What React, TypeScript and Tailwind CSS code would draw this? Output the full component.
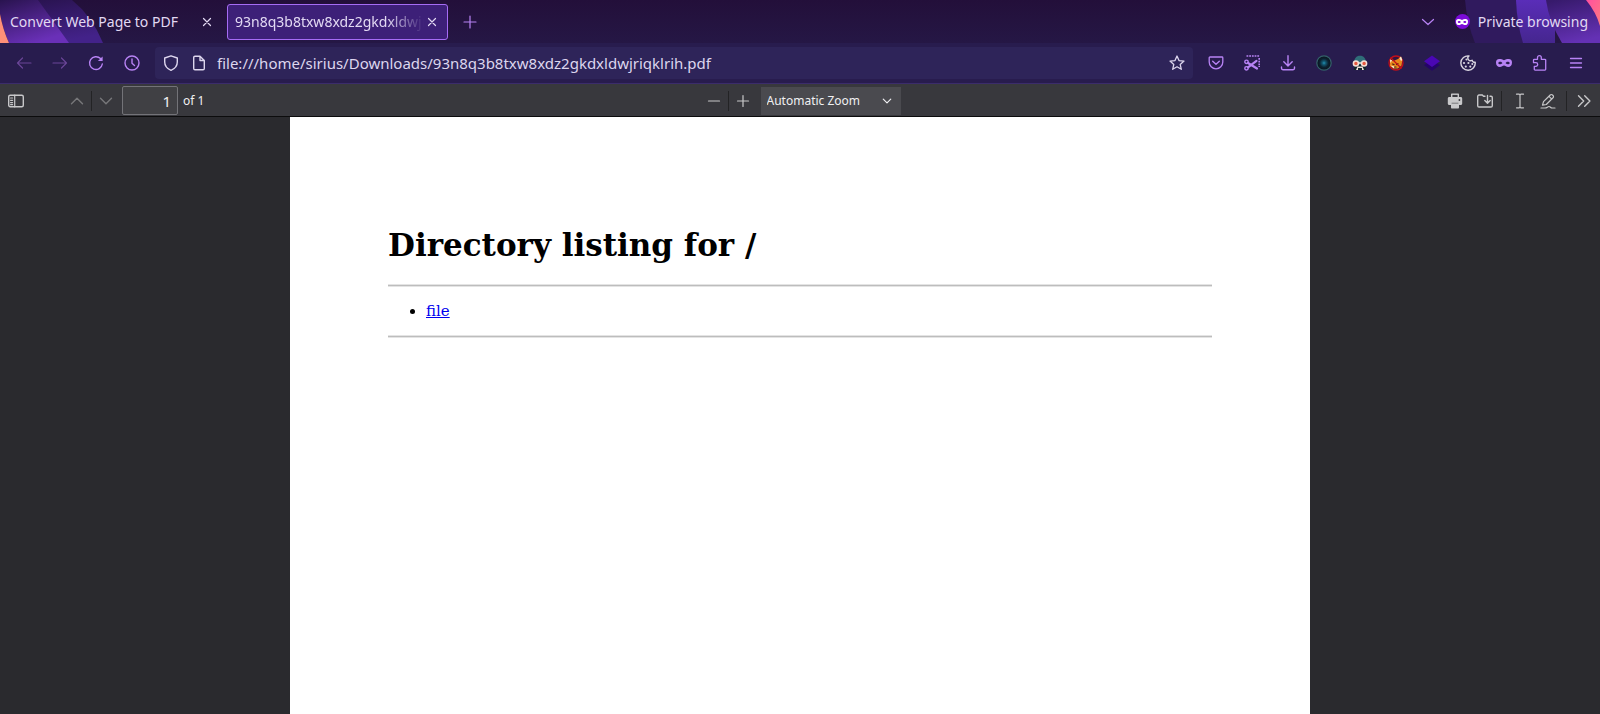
import type { ReactNode } from "react";

type IconProps = { children: ReactNode; className?: string };

function Icon({ children, className = "size-4" }: IconProps) {
  return (
    <svg
      viewBox="0 0 16 16"
      fill="none"
      stroke="currentColor"
      strokeWidth="1.2"
      strokeLinecap="round"
      strokeLinejoin="round"
      aria-hidden="true"
      className={`shrink-0 ${className}`}
    >
      {children}
    </svg>
  );
}

function NavButton({ label, children, disabled }: { label: string; children: ReactNode; disabled?: boolean }) {
  return (
    <button
      type="button"
      aria-label={label}
      disabled={disabled}
      className="flex h-8 w-9 shrink-0 items-center justify-center text-[#b883f5] disabled:text-[#6a4597]"
    >
      {children}
    </button>
  );
}

function ToolButton({ label, children, width = "w-7", disabled }: { label: string; children: ReactNode; width?: string; disabled?: boolean }) {
  return (
    <button
      type="button"
      aria-label={label}
      disabled={disabled}
      className={`flex h-7 shrink-0 items-center justify-center text-[#c8c8ca] disabled:text-[#77777a] ${width}`}
    >
      {children}
    </button>
  );
}

function Separator() {
  return <span className="h-5 w-px shrink-0 bg-[#232325]" />;
}

const maskPath =
  "M8 5.2C6.6 4.2 5 3.9 3.4 3.9 1 3.9 0 5.3 0 7.5 0 10.3 1.5 12.1 3.9 12.1c1.8 0 2.8-1.6 4.1-1.6s2.3 1.6 4.1 1.6c2.4 0 3.9-1.8 3.9-4.6 0-2.2-1-3.6-3.4-3.6-1.6 0-3.2.3-4.6 1.3ZM4.3 9.3c-1.2 0-1.9-.8-2.1-1.4.4-.6 1-1.2 2.1-1.2s1.9.7 2.1 1.4c-.3.7-1 1.2-2.1 1.2Zm7.400 0c-1.100 0-1.800-.5-2.100-1.200.2-.7 1-1.400 2.100-1.400s1.700.6 2.100 1.200c-.2.6-.9 1.400-2.100 1.400Z";

function Mask({ className }: { className?: string }) {
  return (
    <svg viewBox="0 0 16 16" fill="currentColor" fillRule="evenodd" aria-hidden="true" className={className}>
      <path d={maskPath} />
    </svg>
  );
}

function CloseIcon() {
  return (
    <Icon>
      <path d="m4.500 4.500 7 7m0-7-7 7" />
    </Icon>
  );
}

function TabBar() {
  return (
    <header className="relative flex h-[43px] items-center bg-linear-to-b from-[#230f3a] to-[#251745] text-sm text-[#e2d9f3]">
      <svg viewBox="0 0 110 43" aria-hidden="true" className="absolute top-0 left-0 h-[43px] w-[110px]">
        <defs>
          <linearGradient id="leftBand" x1="0" y1="0" x2="0.5" y2="1">
            <stop offset="0" stopColor="#29134f" />
            <stop offset="1" stopColor="#6a30b8" />
          </linearGradient>
          <linearGradient id="leftOuter" x1="0" y1="0" x2="0.3" y2="1">
            <stop offset="0" stopColor="#29134f" />
            <stop offset="1" stopColor="#432289" />
          </linearGradient>
        </defs>
        <path d="M30 0H72Q92 16 103 43H60Z" fill="url(#leftOuter)" />
        <path d="M0 0H38L69 43H9Q3 30 0 14Z" fill="url(#leftBand)" />
        <path d="M0 14Q3 30 9 43H0Z" fill="#ff8f78" />
      </svg>
      <svg viewBox="0 0 135 43" aria-hidden="true" className="absolute top-0 right-0 h-[43px] w-[135px]">
        <defs>
          <linearGradient id="rightBand" x1="0" y1="0" x2="0" y2="1">
            <stop offset="0" stopColor="#5a2db8" />
            <stop offset="1" stopColor="#45268f" />
          </linearGradient>
          <linearGradient id="rightInner" x1="0.2" y1="0" x2="0.5" y2="1">
            <stop offset="0" stopColor="#371a6c" />
            <stop offset="1" stopColor="#6431b4" />
          </linearGradient>
          <linearGradient id="rightEdge" x1="0" y1="0" x2="1" y2="1">
            <stop offset="0" stopColor="#ff4fa0" />
            <stop offset="1" stopColor="#ff7a7f" />
          </linearGradient>
        </defs>
        <path d="M0 0H60V43H10Q2 24 0 0Z" fill="#301a5e" />
        <path d="M51 0H90V43H58Q52 24 51 0Z" fill="url(#rightBand)" />
        <path d="M81 0H135V43H97Q84 22 81 0Z" fill="url(#rightInner)" />
        <path d="M121 0H135V26Q131 12 121 0Z" fill="url(#rightEdge)" />
      </svg>

      <div className="relative flex w-full items-center">
        <div className="flex w-[227px] shrink-0 items-center justify-between pr-3 pl-2.5">
          <span>Convert Web Page to PDF</span>
          <button type="button" aria-label="Close Convert Web Page to PDF">
            <CloseIcon />
          </button>
        </div>
        <div className="flex h-9 w-[221px] shrink-0 items-center rounded-[3px] border border-[#a66cf5] bg-[#3d2078] px-[7px]">
          <span className="min-w-0 flex-1 overflow-hidden whitespace-nowrap [mask-image:linear-gradient(to_right,black_80%,transparent)]">
            93n8q3b8txw8xdz2gkdxldwjriqklrih.pdf
          </span>
          <button type="button" aria-label="Close 93n8q3b8txw8xdz2gkdxldwjriqklrih.pdf">
            <CloseIcon />
          </button>
        </div>
        <button type="button" aria-label="New tab" className="ml-3.5 text-[#b883f5]">
          <Icon>
            <path d="M8 2v12M2 8h12" />
          </Icon>
        </button>
        <button type="button" aria-label="List all tabs" className="mr-[19px] ml-auto text-[#b883f5]">
          <Icon>
            <path d="m2.500 5.500 5.500 5 5.500-5" />
          </Icon>
        </button>
        <div className="mr-3 flex items-center gap-2">
          <span className="flex size-[15px] items-center justify-center rounded-full bg-[#7b0bd8] text-white">
            <Mask className="size-3" />
          </span>
          <span>Private browsing</span>
        </div>
      </div>
    </header>
  );
}

function NavBar() {
  return (
    <nav className="flex h-[41px] items-center border-b border-[#3b2c6b] bg-[#281c4e] px-1.5">
      <NavButton label="Back" disabled>
        <Icon>
          <path d="M15 8H1.500M6.500 3l-5 5 5 5" />
        </Icon>
      </NavButton>
      <NavButton label="Forward" disabled>
        <Icon>
          <path d="M1 8h13.500M9.500 3l5 5-5 5" />
        </Icon>
      </NavButton>
      <NavButton label="Reload">
        <Icon>
          <path d="M14.300 9a6.400 6.400 0 1 1-1.800-5.400" strokeWidth="1.400" />
          <path d="M14.600 1.400v4.700H9.900Z" fill="currentColor" stroke="none" />
        </Icon>
      </NavButton>
      <NavButton label="History">
        <Icon>
          <circle cx="8" cy="8" r="7" strokeWidth="1.400" />
          <path d="M8 4v4.300l2.500 2.200" strokeWidth="1.400" />
        </Icon>
      </NavButton>

      <div className="ml-[5px] flex h-8 min-w-0 flex-1 items-center rounded bg-[#2e2459] px-2 text-[#ddd6ee]">
        <Icon>
          <path d="M8 .8 14.300 3v4c0 4-2.700 6.800-6.300 8.300C4.400 13.800 1.700 11 1.700 7V3Z" strokeWidth="1.400" />
        </Icon>
        <Icon className="ml-3 size-4">
          <path d="M9 1.200H4a1.300 1.300 0 0 0-1.300 1.300v11A1.300 1.300 0 0 0 4 14.800h8a1.300 1.300 0 0 0 1.300-1.300V5.500L9 1.200v4.300h4.300" strokeWidth="1.400" />
        </Icon>
        <input
          type="text"
          aria-label="Address"
          defaultValue="file:///home/sirius/Downloads/93n8q3b8txw8xdz2gkdxldwjriqklrih.pdf"
          className="ml-2.5 min-w-0 flex-1 bg-transparent text-[15px] outline-none"
        />
        <button type="button" aria-label="Bookmark this page">
          <Icon>
            <path d="m8 1 2 4.600 5 .5-3.800 3.300 1.100 4.900L8 11.800l-4.300 2.500 1.100-4.900L1 6.100l5-.5Z" strokeWidth="1.300" />
          </Icon>
        </button>
      </div>

      <div className="ml-[5px] flex items-center">
        <NavButton label="Save to Pocket">
          <Icon>
            <path d="M2 2h12a.8.8 0 0 1 .8.8V7a6.800 6.800 0 0 1-13.600 0V2.800A.8.8 0 0 1 2 2Z" strokeWidth="1.300" />
            <path d="m4.700 6.300 3.300 3 3.300-3" strokeWidth="1.400" />
          </Icon>
        </NavButton>
        <NavButton label="Take a screenshot">
          <Icon>
            <path d="M2.500 1H16M15.200 3v9" strokeWidth="1.600" strokeDasharray="1.800 .9" strokeLinecap="butt" />
            <circle cx="2.500" cy="6.800" r="1.700" strokeWidth="1.400" />
            <circle cx="2.500" cy="13.300" r="1.700" strokeWidth="1.400" />
            <path d="m4 8 9 5.500M4 12.300l8.500-6.500" strokeWidth="2.200" />
          </Icon>
        </NavButton>
        <NavButton label="Downloads">
          <Icon>
            <path d="M8 .7v10M3.800 6.800 8 11l4.200-4.200M1.500 12v1.300c0 .8.5 1.400 1.400 1.400h10.200c.9 0 1.400-.6 1.400-1.400V12" strokeWidth="1.400" />
          </Icon>
        </NavButton>
        <NavButton label="Camera lens extension">
          <Icon>
            <defs>
              <radialGradient id="lens">
                <stop offset="0" stopColor="#2391b4" />
                <stop offset="0.25" stopColor="#12566f" />
                <stop offset="0.6" stopColor="#0c2231" />
                <stop offset="1" stopColor="#0a121c" />
              </radialGradient>
            </defs>
            <circle cx="8" cy="8" r="7.200" fill="url(#lens)" stroke="#34606a" strokeWidth="1.200" />
          </Icon>
        </NavButton>
        <NavButton label="User agent extension">
          <Icon>
            <path d="M2 8C2 3.300 4.300.7 8 .7S14 3.300 14 8v6.500H2Z" fill="#2f6d78" stroke="none" />
            <path d="M2 9.500h12V15H2Z" fill="#14242c" stroke="none" />
            <path d="M5.500 11.500h5L12 15H4Z" fill="#efe0d8" stroke="none" />
            <path d="M6 13h4v2H6Z" fill="#14242c" stroke="none" />
            <path d="M5 8h6" stroke="#f4dfd6" strokeWidth="1.600" />
            <circle cx="3.900" cy="8.500" r="2.500" fill="#e6583f" stroke="#f4dfd6" strokeWidth="1.500" />
            <circle cx="12.100" cy="8.500" r="2.500" fill="#e6583f" stroke="#f4dfd6" strokeWidth="1.500" />
          </Icon>
        </NavButton>
        <NavButton label="FoxyProxy">
          <Icon>
            <circle cx="8" cy="8" r="7" fill="#35163f" stroke="#c40e18" strokeWidth="1.300" />
            <path d="M2 4.500 5.500 6 10 4l3-2.500 1.300 4-.8 5-3.500 3H5.500L2 11Z" fill="#e8871c" stroke="none" />
            <path d="m2 4.500 2 .8L2.500 8ZM11.500 3l1.500-1.500L14.300 5 13 6ZM2.500 10.500l3.500 3 .5-2Z" fill="#f6ead6" stroke="none" />
            <path d="m4.500 9 1.500.6M8.500 9.500l1.500-.8M6.500 12H8" stroke="#4e2412" />
            <path d="m3 3 10 10" stroke="#c40e18" strokeWidth="1.300" />
          </Icon>
        </NavButton>
        <NavButton label="Layers extension">
          <Icon>
            <path d="m0 10 8-5 8 5-8 5.800Z" fill="#25046a" stroke="none" />
            <path d="m0 6.200L8 .5l8 5.700L8 12Z" fill="#4a07b4" stroke="none" />
          </Icon>
        </NavButton>
        <NavButton label="Cookie editor">
          <Icon className="size-4 text-[#d9d5e0]">
            <path d="M9 .9a7.200 7.200 0 1 0 6.200 6.300 2.400 2.400 0 0 1-3.100-2A2.600 2.600 0 0 1 9 .9Z" strokeWidth="1.400" />
            <g fill="currentColor" stroke="none">
              <circle cx="6.500" cy="4.500" r="1.100" />
              <circle cx="4" cy="8" r="1.100" />
              <circle cx="8.400" cy="8" r="1.100" />
              <circle cx="5.800" cy="11.600" r="1.100" />
              <circle cx="10.300" cy="11.600" r="1.100" />
              <circle cx="12.300" cy="8.900" r="1" />
            </g>
          </Icon>
        </NavButton>
        <NavButton label="Private window">
          <Mask className="size-4" />
        </NavButton>
        <NavButton label="Extensions">
          <Icon>
            <path d="M5.500 4.300V2.600a1.900 1.900 0 0 1 3.800 0v1.700h3.600a.8.8 0 0 1 .8.8v9.200a.8.8 0 0 1-.8.8H3.100a.8.8 0 0 1-.8-.8v-3h1.600a1.800 1.800 0 0 0 0-3.600H1.500V5.100a.8.8 0 0 1 .8-.8Z" strokeWidth="1.300" />
          </Icon>
        </NavButton>
        <NavButton label="Open application menu">
          <Icon>
            <path d="M2.500 3.500h11M2.500 8h11M2.500 12.500h11" strokeWidth="1.300" />
          </Icon>
        </NavButton>
      </div>
    </nav>
  );
}

function PdfToolbar() {
  return (
    <div className="grid h-[33px] grid-cols-[1fr_auto_1fr] items-center border-b border-[#0c0c0d] bg-[#38383d] pt-px text-xs text-[#f0f0f2]">
      <div className="flex items-center pl-0.5">
        <ToolButton label="Toggle sidebar">
          <Icon>
            <rect x=".7" y="2.200" width="14.600" height="11.600" rx="1.500" strokeWidth="1.400" />
            <path d="M6.700 2.200v11.600M2.600 5h2M2.600 7.300h2M2.600 9.600h2M2.600 11.700h2" />
          </Icon>
        </ToolButton>
        <span className="w-[33px]" />
        <ToolButton label="Previous page" disabled>
          <Icon>
            <path d="m2.500 10.800 5.500-5.600 5.500 5.600" strokeWidth="1.400" />
          </Icon>
        </ToolButton>
        <Separator />
        <ToolButton label="Next page" disabled>
          <Icon>
            <path d="m2.500 5.200 5.500 5.600 5.500-5.600" strokeWidth="1.400" />
          </Icon>
        </ToolButton>
        <input
          type="text"
          aria-label="Page"
          defaultValue="1"
          className="ml-0.5 h-[29px] w-14 rounded-xs border border-[#737378] bg-[#404044] px-1.5 text-right text-[15px] outline-none"
        />
        <span className="ml-[5px]">of 1</span>
      </div>

      <div className="flex items-center">
        <ToolButton label="Zoom out">
          <Icon>
            <path d="M2.500 8h11" />
          </Icon>
        </ToolButton>
        <Separator />
        <ToolButton label="Zoom in">
          <Icon>
            <path d="M2.500 8h11M8 2.500v11" />
          </Icon>
        </ToolButton>
        <div className="relative ml-1">
          <select aria-label="Zoom" className="block h-7 w-[140px] appearance-none bg-[#4a4a4f] pl-1.5 outline-none">
            <option>Automatic Zoom</option>
          </select>
          <Icon className="pointer-events-none absolute top-2 right-2 size-3">
            <path d="m3 5.500 5 5 5-5" strokeWidth="1.600" />
          </Icon>
        </div>
      </div>

      <div className="flex items-center justify-end">
        <ToolButton label="Print">
          <Icon>
            <path
              d="M4 4V1.500C4 .9 4.300.5 5 .5h6c.7 0 1 .4 1 1V4h1.700c.9 0 1.500.6 1.500 1.500v5c0 .9-.6 1.500-1.500 1.500H12v2.500c0 .6-.4 1-1 1H5c-.6 0-1-.4-1-1V12H2.300C1.400 12 .8 11.400.8 10.500v-5C.8 4.600 1.400 4 2.300 4Z"
              fill="currentColor"
              stroke="none"
            />
            <path d="M5.400 1.900h5.200V4H5.400Z" fill="#38383d" stroke="none" />
            <circle cx="12.400" cy="7" r=".9" fill="#38383d" stroke="none" />
            <path d="M5 10.200h6" stroke="#77777a" strokeWidth="1" />
          </Icon>
        </ToolButton>
        <ToolButton label="Save" width="w-8">
          <Icon>
            <path d="M6.500 3.200 5.300 2H2A1.300 1.300 0 0 0 .7 3.300v9.400A1.300 1.300 0 0 0 2 14h12a1.300 1.300 0 0 0 1.300-1.300V4.500A1.300 1.300 0 0 0 14 3.200h-1M6.500 3.200H8M10.500 2.500V10M7.800 7.500l2.700 2.800 2.700-2.800" strokeWidth="1.400" />
          </Icon>
        </ToolButton>
        <Separator />
        <ToolButton label="Text" width="w-9">
          <Icon>
            <path d="M4.500 1.200H7c.6 0 1 .4 1 1 0-.6.4-1 1-1h2.500M8 2.200v11.600M4.500 14.800H7c.6 0 1-.4 1-1 0 .6.4 1 1 1h2.500" />
          </Icon>
        </ToolButton>
        <ToolButton label="Draw" width="w-5">
          <Icon>
            <path d="M2.500 12.200 3.500 8.700 10.200 2a1.600 1.600 0 0 1 2.300 0l.5.5a1.600 1.600 0 0 1 0 2.300L6.300 11.500ZM9 3.300l2.800 2.800M1 15h4c2 0 2.500-1.500 4-1.500S10.500 15 12 15h3" />
          </Icon>
        </ToolButton>
        <span className="w-2" />
        <Separator />
        <ToolButton label="Tools" width="w-[33px]">
          <Icon>
            <path d="m2.500 2.800 5.200 5.200-5.200 5.200M8.700 2.800l5.200 5.200-5.200 5.200" strokeWidth="1.400" />
          </Icon>
        </ToolButton>
      </div>
    </div>
  );
}

function Rule() {
  return <hr className="h-[3px] border-y border-[#e4e4e4] bg-[#bdbdbd]" />;
}

export default function App() {
  return (
    <div className="flex h-screen flex-col overflow-hidden bg-[#2a2a2e] font-['Noto_Sans',sans-serif]">
      <TabBar />
      <NavBar />
      <PdfToolbar />
      <main className="mx-auto w-full max-w-[1020px] flex-1 bg-white px-[98px] pt-[110px] font-['DejaVu_Serif',serif] text-black">
        <h1 className="mb-5 text-[31px] leading-[37px] font-bold">Directory listing for /</h1>
        <Rule />
        <ul className="my-[15px] list-disc pl-[38px] text-[15px] leading-[18px]">
          <li>
            <a href="#file" className="text-[#0000ee] underline">
              file
            </a>
          </li>
        </ul>
        <Rule />
      </main>
    </div>
  );
}
